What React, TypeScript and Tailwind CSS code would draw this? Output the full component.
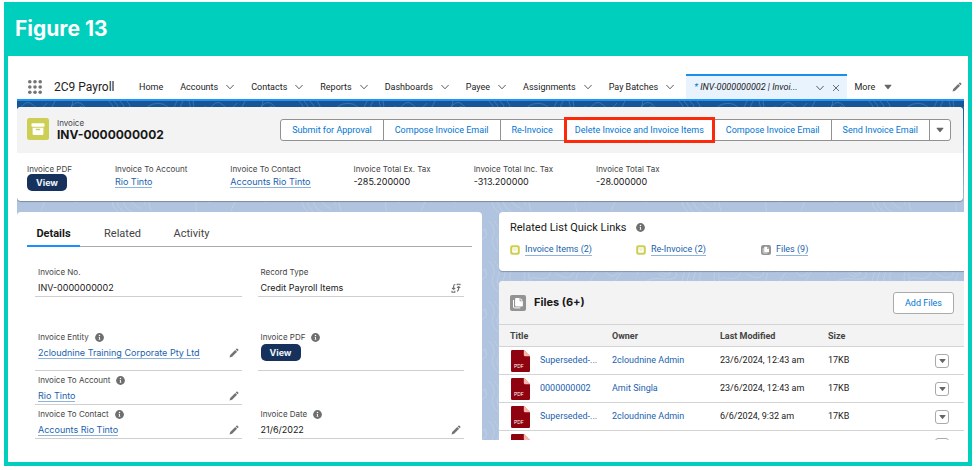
import React from 'react';

function Chevron() {
  return (
    <svg className="h-2 w-2 shrink-0" viewBox="0 0 8 8" fill="none" stroke="#5c5c5c" strokeWidth="1" strokeLinecap="round" strokeLinejoin="round">
      <path d="M0.6 2.2 4 5.8 7.4 2.2" />
    </svg>
  );
}

function Caret({ small = false }: { small?: boolean }) {
  return (
    <svg className={small ? 'h-2 w-[7px]' : 'h-2 w-2'} viewBox="0 0 8 8" fill="#666" aria-hidden="true">
      <path d="M1.1 1.8h5.8c.5 0 .7.5.4.8L4.4 6.1a.5.5 0 0 1-.8 0L.7 2.6c-.3-.3-.1-.8.4-.8Z" />
    </svg>
  );
}

function Pencil() {
  return (
    <svg className="h-[10px] w-[10px] shrink-0" viewBox="0 0 10 10" fill="#747474" aria-hidden="true">
      <path d="M.6 9.4 1.2 6.9 6.2 1.9 8.1 3.8 3.1 8.8Z" />
      <path d="M6.7 1.4 7.4.7c.3-.3.8-.3 1.1 0l.8.8c.3.3.3.8 0 1.1l-.7.7Z" />
    </svg>
  );
}

function Info() {
  return (
    <svg className="h-[9px] w-[9px] shrink-0" viewBox="0 0 10 10" aria-hidden="true">
      <circle cx="5" cy="5" r="4.9" fill="#6f6f6f" />
      <circle cx="5" cy="2.8" r=".8" fill="#fff" />
      <path d="M4 4.4h1.5v2.5H6v.7H4v-.7h.5V5.1H4Z" fill="#fff" />
    </svg>
  );
}

function RecordTypeIcon() {
  return (
    <svg className="h-[10px] w-[10px] shrink-0" viewBox="0 0 10 10" fill="none" stroke="#6f6f6f" strokeWidth="1.1" aria-hidden="true">
      <path d="M4.4 1.5Q2.6 1.5 2.6 3.2v2.6M1 5l1.6 1.3L4.200 5M1 7.800v1.400h2.800V7.800" />
      <path d="M6.200 2.200V1.200h2.800v1M6 4.800l1.600-1.200L9.200 4.800M7.600 4v1.800Q7.600 7.800 6 8.300" />
    </svg>
  );
}

function InvoiceIcon({ small = false }: { small?: boolean }) {
  return small ? (
    <svg className="h-[10px] w-[10px] shrink-0" viewBox="0 0 10 10" aria-hidden="true">
      <rect x=".2" y=".2" width="9.6" height="9.6" rx="2.2" fill="#cdcf55" />
      <rect x="2.2" y="2.3" width="5.6" height="5.4" rx=".7" fill="#fff" />
      <path d="M2.6 4h4.8M4.2 5.3h1.6" stroke="#cdcf55" strokeWidth=".5" />
    </svg>
  ) : (
    <svg className="h-[22px] w-[22px] shrink-0" viewBox="0 0 22 22" aria-hidden="true">
      <rect width="22" height="22" rx="2.5" fill="#cdcf55" />
      <rect x="4.5" y="5.2" width="13" height="3.5" rx=".8" fill="#fff" />
      <path d="M5.6 9.8h10.8V16q0 1.1-1.1 1.1H6.7Q5.6 17.1 5.6 16Z" fill="#fff" />
      <rect x="8.7" y="10.8" width="4.6" height="1.5" rx=".7" fill="#cdcf55" />
    </svg>
  );
}

function FilesIcon({ small = false }: { small?: boolean }) {
  return (
    <svg className={small ? 'h-[10px] w-[10px] shrink-0' : 'h-4 w-4 shrink-0'} viewBox="0 0 16 16" aria-hidden="true">
      <rect width="16" height="16" rx={small ? 3.5 : 2} fill="#939393" />
      <path d="M6 2.9h3.6v2.6q0 .8.8.8h2.5v4.2q0 .9-.9.9H6q-.9 0-.9-.9V3.8q0-.9.9-.9Z" fill="#fff" />
      <path d="M10.5 2.9 12.9 5.4h-2.4Z" fill="#fff" />
      <path d="M3.5 5v7q0 .9.9.9h5.9" fill="none" stroke="#fff" strokeWidth="1" />
    </svg>
  );
}

function PdfIcon() {
  return (
    <svg className="block h-[22px] w-[19px]" viewBox="0 0 19 22" aria-hidden="true">
      <path d="M1.2 0H12.8L19 6.3V20.8Q19 22 17.8 22H1.2Q0 22 0 20.8V1.2Q0 0 1.2 0Z" fill="#8e030f" />
      <path d="M12.8 0 19 6.3H14Q12.8 6.3 12.8 5.1Z" fill="#feb8ab" />
      <text x="3" y="18" fontSize="5" fill="#fff" fontFamily="Inter, sans-serif">PDF</text>
    </svg>
  );
}

function Contours({ id, stroke, opacity }: { id: string; stroke: string; opacity: number }) {
  return (
    <svg className="pointer-events-none absolute inset-0 h-full w-full" aria-hidden="true">
      <defs>
        <pattern id={id} width="190" height="40" patternUnits="userSpaceOnUse">
          <g fill="none" stroke={stroke} strokeOpacity={opacity} strokeWidth=".7">
            <path d="M0 12Q9-4 16 4T30 2M2 22Q12 2 20 12T38 0M24 30Q34 4 44 9T56 0" />
            <path d="M50 14Q58-6 68 6T88 8Q94 20 78 18T58 22M57 12Q64 0 70 10T84 12" />
            <path d="M92 0Q100 8 96 16T104 34M97 0Q105 8 101 16T110 34M103 0Q111 8 107 16T116 32M110 0Q116 8 113 14T124 28" />
            <path d="M128 24Q124 6 136 3T154 10Q152 20 140 17T134 30M132 18Q130 8 138 7T148 11M160 0Q152 12 166 16T176 0M166 0Q160 10 168 11T172 0M180 34Q176 14 184 8T190 12" />
          </g>
        </pattern>
      </defs>
      <rect width="100%" height="100%" fill={`url(#${id})`} />
    </svg>
  );
}

const navItems = ['Accounts', 'Contacts', 'Reports', 'Dashboards', 'Payee', 'Assignments', 'Pay Batches'];

function NavBar() {
  return (
    <nav className="mt-[18px] flex h-[25px] items-stretch pl-[11px] pr-[2px] font-['Roboto','Liberation_Sans',sans-serif] text-[9px] text-[#222]">
      <button aria-label="App Launcher" className="self-center">
        <svg className="h-[14px] w-[14px]" viewBox="0 0 14 14" fill="#747474">
          {[1.8, 7, 12.2].map((y) => [1.8, 7, 12.2].map((x) => <circle key={`${x}-${y}`} cx={x} cy={y} r="1.8" />))}
        </svg>
      </button>
      <span className="ml-3 w-[62px] self-center whitespace-nowrap pt-px text-[12px]">2C9 Payroll</span>
      <a href="#home" className="ml-[23px] self-center pt-[2px]">Home</a>
      {navItems.map((item) => (
        <span key={item} className="ml-[17px] flex items-center gap-2 whitespace-nowrap">
          <a href={`#${item}`} className="pt-[2px]">{item}</a>
          <button aria-label={`${item} list`}><Chevron /></button>
        </span>
      ))}
      <span className="ml-3 flex items-center border-t-2 border-[#1b8fe8] bg-[#e9f3fd] pl-2 pr-[7px] whitespace-nowrap">
        <a href="#invoice" className="italic"><span className="text-[#0176d3]">* </span>INV-0000000002 | Invoi...</a>
        <button aria-label="Tab actions" className="ml-[18px]"><Chevron /></button>
        <button aria-label="Close tab" className="ml-2">
          <svg className="h-2 w-2" viewBox="0 0 8 8" stroke="#5c5c5c" strokeWidth=".9"><path d="m1 1 6 6M7 1 1 7" /></svg>
        </button>
      </span>
      <button className="ml-2 flex items-center gap-[9px]"><span className="pt-[2px]">More</span><Caret /></button>
      <button aria-label="Edit navigation" className="ml-auto self-center"><Pencil /></button>
    </nav>
  );
}

const actionClass = 'flex items-center border-r border-[#919191] px-[11px] pt-[2px]';

function Link({ children }: { children: React.ReactNode }) {
  return <a href="#record" className="border-b border-[#8db4dc] text-[#1b5fae]">{children}</a>;
}

function ViewButton() {
  return <button className="block h-[17px] w-10 rounded-[5px] bg-[#16325c] text-[9px] font-bold leading-[17px] text-[#eef4fb]">View</button>;
}

function Summary({ label, children }: { label: string; children: React.ReactNode }) {
  return (
    <div className="whitespace-nowrap">
      <dt className="text-[8px] leading-[10px] text-[#444]">{label}</dt>
      <dd className="text-[9px] leading-[15px] text-[#181818]">{children}</dd>
    </div>
  );
}

function RecordHeader() {
  return (
    <section className="relative mr-px overflow-hidden rounded bg-white shadow-[0_1px_1px_rgba(90,100,120,0.6)]">
      <div className="flex h-[46px] items-center bg-[#f3f3f3] pl-[10px] pr-3">
        <div className="mb-[3px]"><InvoiceIcon /></div>
        <div className="ml-2">
          <p className="text-[8px] leading-[9px] text-[#444]">Invoice</p>
          <h1 className="text-[12px] font-bold leading-[14px] text-[#181818]">INV-0000000002</h1>
        </div>
        <div className="ml-auto flex h-[22px] rounded-[3px] border border-[#919191] bg-white font-['Roboto','Liberation_Sans',sans-serif] text-[9px] whitespace-nowrap text-[#0176d3]">
          <button className={actionClass}>Submit for Approval</button>
          <button className={actionClass}>Compose Invoice Email</button>
          <button className="flex items-center px-[11px] pt-[2px]">Re-Invoice</button>
          <button className="-my-[3px] flex items-center border-[3px] border-[#fa2a0a] px-2 pt-[2px]">Delete Invoice and Invoice Items</button>
          <button className={actionClass}>Compose Invoice Email</button>
          <button className={actionClass}>Send Invoice Email</button>
          <button aria-label="More actions" className="flex w-5 items-center justify-center"><Caret /></button>
        </div>
      </div>
      <dl className="flex h-12 gap-[43px] pl-[10px] pt-[11px]">
        <Summary label="Invoice PDF"><ViewButton /></Summary>
        <Summary label="Invoice To Account"><Link>Rio Tinto</Link></Summary>
        <Summary label="Invoice To Contact"><Link>Accounts Rio Tinto</Link></Summary>
        <Summary label="Invoice Total Ex. Tax">-285.200000</Summary>
        <Summary label="Invoice Total Inc. Tax">-313.200000</Summary>
        <Summary label="Invoice Total Tax">-28.000000</Summary>
      </dl>
    </section>
  );
}

function Field({ label, info = false, action, children }: { label: string; info?: boolean; action?: React.ReactNode; children: React.ReactNode }) {
  return (
    <div className="border-b border-[#cfcfcf] px-[3px] pb-px pt-1">
      <div className="flex h-[10px] items-center gap-[6px] text-[8px] leading-[10px] text-[#444]">
        {label}
        {info && <Info />}
      </div>
      <div className="mt-[3px] flex h-[15px] items-center justify-between text-[9px] leading-[11px] text-[#181818]">
        <span>{children}</span>
        {action && <button aria-label={`Edit ${label}`}>{action}</button>}
      </div>
    </div>
  );
}

function Details() {
  return (
    <section className="h-full rounded-t bg-white px-[10px]">
      <div role="tablist" className="flex h-[35px] items-stretch border-b border-[#aaa] font-['Roboto','Liberation_Sans',sans-serif] text-[11px] text-[#444]">
        <button role="tab" aria-selected="true" className="-mb-px w-[53px] border-b-2 border-[#1b8fff] pt-[11px] font-bold text-[#181818]">Details</button>
        <button role="tab" aria-selected="false" className="ml-4 w-[53px] pt-[10px]">Related</button>
        <button role="tab" aria-selected="false" className="ml-4 w-[53px] pt-[10px]">Activity</button>
      </div>
      <div className="grid grid-cols-2 gap-x-4 px-2 pt-4">
        <Field label="Invoice No.">INV-0000000002</Field>
        <Field label="Record Type" action={<RecordTypeIcon />}>Credit Payroll Items</Field>
      </div>
      <div className="grid grid-cols-2 gap-x-4 px-2 pt-[31px]">
        <div className="grid h-[43px]">
          <Field label="Invoice Entity" info action={<Pencil />}><Link>2cloudnine Training Corporate Pty Ltd</Link></Field>
        </div>
        <div className="grid h-[43px]">
          <Field label="Invoice PDF" info><ViewButton /></Field>
        </div>
      </div>
      <div className="grid grid-cols-2 gap-x-4 px-2">
        <Field label="Invoice To Account" info action={<Pencil />}><Link>Rio Tinto</Link></Field>
        <div />
        <Field label="Invoice To Contact" info action={<Pencil />}><Link>Accounts Rio Tinto</Link></Field>
        <Field label="Invoice Date" info action={<Pencil />}>21/6/2022</Field>
      </div>
    </section>
  );
}

const files = [
  ['Superseded-...', '2cloudnine Admin', '23/6/2024, 12:43 am', '17KB'],
  ['0000000002', 'Amit Singla', '23/6/2024, 12:43 am', '17KB'],
  ['Superseded-...', '2cloudnine Admin', '6/6/2024, 9:32 am', '17KB'],
  ['Superseded-...', '2cloudnine Admin', '6/6/2024, 9:32 am', '17KB'],
];

function Sidebar() {
  return (
    <div className="font-['Roboto','Liberation_Sans',sans-serif]">
      <section className="h-[59px] rounded-l bg-white pl-[11px] pt-2 shadow-[0_1px_1px_rgba(90,100,120,0.5)]">
        <h2 className="flex items-center gap-[9px] text-[11px] leading-[15px] text-[#181818]">Related List Quick Links <Info /></h2>
        <div className="mt-[9px] grid grid-cols-[126px_125px_auto] text-[9px] leading-[11px]">
          <span className="flex items-center gap-[5px]"><InvoiceIcon small /><Link>Invoice Items (2)</Link></span>
          <span className="flex items-center gap-[5px]"><InvoiceIcon small /><Link>Re-Invoice (2)</Link></span>
          <span className="flex items-center gap-[5px]"><FilesIcon small /><Link>Files (9)</Link></span>
        </div>
      </section>
      <section className="mt-[10px] rounded-l bg-white">
        <div className="flex h-[43px] items-center rounded-tl bg-[#f3f3f3] pl-[11px] pr-[10px]">
          <FilesIcon />
          <h2 className="ml-2 font-['Inter','Liberation_Sans',sans-serif] text-[11px] font-bold text-[#181818]">Files (6+)</h2>
          <button className="ml-auto h-[22px] rounded-[3px] border border-[#aaa] bg-white px-[11px] pt-[2px] text-[9px] text-[#0176d3]">Add Files</button>
        </div>
        <table className="w-full table-fixed border-collapse text-left text-[9px] text-[#222]">
          <thead className="bg-[#f3f3f3] text-[#444]">
            <tr className="h-[22px] border-y border-[#d4d4d4]">
              <th className="w-[113px] pl-[11px] pt-[2px] font-bold">Title</th>
              <th className="w-[108px] pt-[2px] font-bold">Owner</th>
              <th className="w-[108px] pt-[2px] font-bold">Last Modified</th>
              <th className="w-[70px] pt-[2px] font-bold">Size</th>
              <th aria-label="Actions" />
            </tr>
          </thead>
          <tbody>
            {files.map((file, i) => (
              <tr key={i} className="h-7 border-b border-[#d4d4d4]">
                <td className="pl-3">
                  <a href="#file" className="flex items-center gap-[10px] text-[#1b5fae]"><PdfIcon /><span className="pt-px">{file[0]}</span></a>
                </td>
                <td className="pt-px"><a href="#owner" className="text-[#1b5fae]">{file[1]}</a></td>
                <td className="pt-px">{file[2]}</td>
                <td className="pt-px">{file[3]}</td>
                <td>
                  <button aria-label="File actions" className="ml-auto mr-[15px] flex h-[14px] w-[14px] items-center justify-center rounded-[3px] border border-[#aaa]"><Caret small /></button>
                </td>
              </tr>
            ))}
          </tbody>
        </table>
      </section>
    </div>
  );
}

export default function App() {
  return (
    <div className="flex h-screen flex-col bg-white px-1 pb-1 pt-[2px] font-['Inter','Liberation_Sans',sans-serif]">
      <div className="flex min-h-0 flex-1 flex-col border-4 border-t-0 border-[#00cfbd] bg-[#00cfbd]">
        <h1 className="flex h-[54px] shrink-0 items-center pl-[7px] text-[21px] font-bold text-white">Figure 13</h1>
        <div className="flex min-h-0 flex-1 flex-col bg-white pb-[22px] pl-[9px] pr-1">
          <NavBar />
          <main className="relative flex min-h-0 flex-1 flex-col overflow-hidden border-t-2 border-[#1b96ff] bg-[#b0c4df]">
            <Contours id="contours" stroke="#ffffff" opacity={0.22} />
            <div className="relative h-[6px] shrink-0 bg-[#195594]">
              <Contours id="contours-dark" stroke="#8fb8e0" opacity={0.4} />
            </div>
            <div className="shrink-0 bg-linear-to-b from-[#195594] to-[#b0c4df]">
              <RecordHeader />
            </div>
            <div className="relative mt-[11px] grid min-h-0 flex-1 grid-cols-2 gap-[17px]">
              <Details />
              <Sidebar />
            </div>
          </main>
        </div>
      </div>
    </div>
  );
}
